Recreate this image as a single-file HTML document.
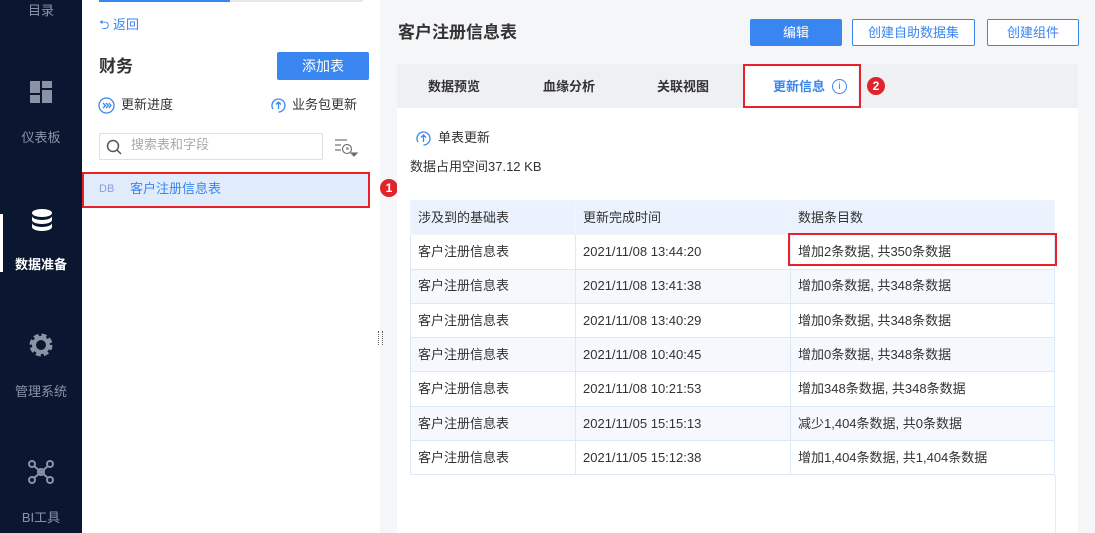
<!DOCTYPE html>
<html><head><meta charset="utf-8"><style>
*{margin:0;padding:0;box-sizing:border-box}
body{width:1095px;height:533px;overflow:hidden;position:relative;background:#f5f6f8;font-family:"Liberation Sans","Noto Sans CJK SC",sans-serif;font-size:13px;color:#333;line-height:1.2}
.abs{position:absolute}
.side{left:0;top:0;width:82px;height:533px;background:#0b1730}
.side .lbl{position:absolute;width:82px;text-align:center;font-size:13px;color:#8a93a6}
.left{left:82px;top:0;width:298px;height:533px;background:#fff}
.btn{position:absolute;border-radius:2px;font-size:13px;text-align:center}
table{border-collapse:collapse;position:absolute;left:410px;top:200px;width:645px}
td{height:34.3px;border:1px solid #dde8f7;padding-left:7px;font-size:13px;color:#333}
tr.h td{background:#e9f2fd;border-color:#f0f5fc}
tr:nth-child(odd):not(.h) td{background:#f5f8fd}
.badge{position:absolute;width:18px;height:18px;border-radius:50%;background:#e0242b;color:#fff;font-size:12px;font-weight:bold;text-align:center;line-height:18px}
</style></head><body>
<div class="abs side">
 <div class="lbl" style="top:3px">目录</div>
 <svg class="abs" style="left:30px;top:81px" width="22" height="22" viewBox="0 0 22 22" fill="#8a93a6"><rect x="0" y="0" width="10" height="12"/><rect x="12" y="0" width="10" height="7"/><rect x="0" y="14" width="10" height="8"/><rect x="12" y="9" width="10" height="13"/></svg>
 <div class="lbl" style="top:130px">仪表板</div>
 <div class="abs" style="left:0;top:214px;width:3px;height:58px;background:#fff"></div>
 <svg class="abs" style="left:30px;top:208px" width="24" height="24" viewBox="0 0 24 24" fill="#fff"><ellipse cx="12" cy="5" rx="10" ry="4"/><path d="M2 8c0 2 4 4 10 4s10-2 10-4v4c0 2-4 4-10 4S2 14 2 12z"/><path d="M2 15c0 2 4 4 10 4s10-2 10-4v4c0 2-4 4-10 4S2 21 2 19z"/></svg>
 <div class="lbl" style="top:257px;color:#fff;font-weight:bold">数据准备</div>
 <svg class="abs" style="left:29px;top:333px" width="24" height="24" viewBox="0 0 24 24"><circle cx="12" cy="12" r="9" fill="none" stroke="#8a93a6" stroke-width="5" stroke-dasharray="4.5 2.6"/><circle cx="12" cy="12" r="7" fill="none" stroke="#8a93a6" stroke-width="4"/></svg>
 <div class="lbl" style="top:384px">管理系统</div>
 <svg class="abs" style="left:28px;top:460px" width="26" height="24" viewBox="0 0 26 24" fill="none" stroke="#8a93a6" stroke-width="2"><circle cx="4" cy="4" r="3"/><circle cx="22" cy="4" r="3"/><circle cx="4" cy="20" r="3"/><circle cx="22" cy="20" r="3"/><circle cx="13" cy="12" r="3"/><path d="M6 6l14 12M20 6L6 18"/></svg>
 <div class="lbl" style="top:510px">BI工具</div>
</div>
<div class="abs left">
 <div class="abs" style="left:17px;top:0;width:264px;height:2px;background:#e8e8e8"></div>
 <div class="abs" style="left:17px;top:0;width:131px;height:2px;background:#3a86f0"></div>
 <div class="abs" style="left:17px;top:17px;color:#3a86f0;font-size:13px">⮌ 返回</div>
 <div class="abs" style="left:17px;top:57px;font-size:17px;font-weight:bold;color:#333">财务</div>
 <div class="btn" style="left:195px;top:52px;width:92px;height:28px;background:#3a86f0;color:#fff;line-height:28px;font-size:14px">添加表</div>
 <svg class="abs" style="left:16px;top:97px" width="17" height="17" viewBox="0 0 17 17" fill="none" stroke="#3a86f0" stroke-width="1.3"><circle cx="8.5" cy="8.5" r="7.5"/><path d="M5 6l2.5 2.5L5 11M8 6l2.5 2.5L8 11M11 6l2 2.5-2 2.5"/></svg>
 <div class="abs" style="left:39px;top:97px;font-size:13px">更新进度</div>
 <svg class="abs" style="left:188px;top:97px" width="17" height="17" viewBox="0 0 17 17" fill="none" stroke="#3a86f0" stroke-width="1.3"><path d="M3 12A6.5 6.5 0 1 1 8.5 15"/><path d="M8.5 12V5M6 7.5l2.5-2.5 2.5 2.5"/></svg>
 <div class="abs" style="left:210px;top:97px;font-size:13px">业务包更新</div>
 <div class="abs" style="left:17px;top:133px;width:224px;height:27px;border:1px solid #dcdfe6;border-radius:2px"></div>
 <svg class="abs" style="left:24px;top:139px" width="16" height="16" viewBox="0 0 16 16" fill="none" stroke="#555" stroke-width="1.5"><circle cx="7" cy="7" r="5.5"/><path d="M11 11l4 4"/></svg>
 <div class="abs" style="left:49px;top:137px;color:#aaa;font-size:13px">搜索表和字段</div>
 <svg class="abs" style="left:252px;top:138px" width="24" height="20" viewBox="0 0 24 20" fill="none" stroke="#777" stroke-width="1.2"><path d="M1 2h12M1 7h6M1 12h6"/><circle cx="13" cy="11" r="4.5"/><path d="M13 9v2h2"/><path d="M17 15h6l-3 3z" fill="#555"/></svg>
 <div class="abs" style="left:0;top:172px;width:288px;height:36px;background:#e0ebfb;border:2px solid #e8202a"></div>
 <div class="abs" style="left:17px;top:183px;color:#8a9be0;font-size:11px">DB</div>
 <div class="abs" style="left:48px;top:181px;color:#3a86f0;font-size:13px">客户注册信息表</div>
</div>
<div class="badge" style="left:380px;top:179px">1</div>
<div class="abs" style="left:378px;top:331px;width:5px;height:14px;border-left:1px dotted #666;border-right:1px dotted #666"></div>
<div class="abs" style="left:398px;top:23px;font-size:17px;font-weight:bold;color:#333">客户注册信息表</div>
<div class="btn" style="left:750px;top:19px;width:92px;height:27px;background:#3a86f0;color:#fff;line-height:27px">编辑</div>
<div class="btn" style="left:852px;top:19px;width:123px;height:27px;background:#fff;border:1px solid #3a86f0;color:#3a86f0;line-height:25px">创建自助数据集</div>
<div class="btn" style="left:987px;top:19px;width:92px;height:27px;background:#fff;border:1px solid #3a86f0;color:#3a86f0;line-height:25px">创建组件</div>
<div class="abs" style="left:397px;top:64px;width:681px;height:469px;background:#fff"></div>
<div class="abs" style="left:397px;top:64px;width:681px;height:44px;background:#eef0f4"></div>
<div class="abs" style="left:428px;top:79px;font-weight:bold;font-size:13px">数据预览</div>
<div class="abs" style="left:543px;top:79px;font-weight:bold;font-size:13px">血缘分析</div>
<div class="abs" style="left:657px;top:79px;font-weight:bold;font-size:13px">关联视图</div>
<div class="abs" style="left:745px;top:64px;width:113px;height:44px;background:#fff;border-top:2px solid #3a86f0"></div>
<div class="abs" style="left:743px;top:64px;width:118px;height:44px;border:2px solid #e8202a"></div>
<div class="abs" style="left:773px;top:79px;font-weight:bold;font-size:13px;color:#3a86f0">更新信息</div>
<div class="abs" style="left:832px;top:79px;width:15px;height:15px;border:1px solid #3a86f0;border-radius:50%;color:#3a86f0;font-size:10px;text-align:center;line-height:13px">i</div>
<div class="badge" style="left:867px;top:77px">2</div>
<svg class="abs" style="left:415px;top:130px" width="17" height="17" viewBox="0 0 17 17" fill="none" stroke="#3a86f0" stroke-width="1.3"><path d="M3 12A6.5 6.5 0 1 1 8.5 15"/><path d="M8.5 12V5M6 7.5l2.5-2.5 2.5 2.5"/></svg>
<div class="abs" style="left:438px;top:130px;font-size:13px">单表更新</div>
<div class="abs" style="left:410px;top:159px;font-size:13px">数据占用空间37.12 KB</div>
<table>
<tr class="h"><td style="width:165px">涉及到的基础表</td><td style="width:215px">更新完成时间</td><td>数据条目数</td></tr>
<tr><td>客户注册信息表</td><td>2021/11/08 13:44:20</td><td>增加2条数据, 共350条数据</td></tr>
<tr><td>客户注册信息表</td><td>2021/11/08 13:41:38</td><td>增加0条数据, 共348条数据</td></tr>
<tr><td>客户注册信息表</td><td>2021/11/08 13:40:29</td><td>增加0条数据, 共348条数据</td></tr>
<tr><td>客户注册信息表</td><td>2021/11/08 10:40:45</td><td>增加0条数据, 共348条数据</td></tr>
<tr><td>客户注册信息表</td><td>2021/11/08 10:21:53</td><td>增加348条数据, 共348条数据</td></tr>
<tr><td>客户注册信息表</td><td>2021/11/05 15:15:13</td><td>减少1,404条数据, 共0条数据</td></tr>
<tr><td>客户注册信息表</td><td>2021/11/05 15:12:38</td><td>增加1,404条数据, 共1,404条数据</td></tr>
</table>
<div class="abs" style="left:788px;top:233px;width:269px;height:33px;border:2px solid #e8202a"></div>
<div class="abs" style="left:1055px;top:475px;width:1px;height:58px;background:#e6e9ee"></div>
</body></html>
